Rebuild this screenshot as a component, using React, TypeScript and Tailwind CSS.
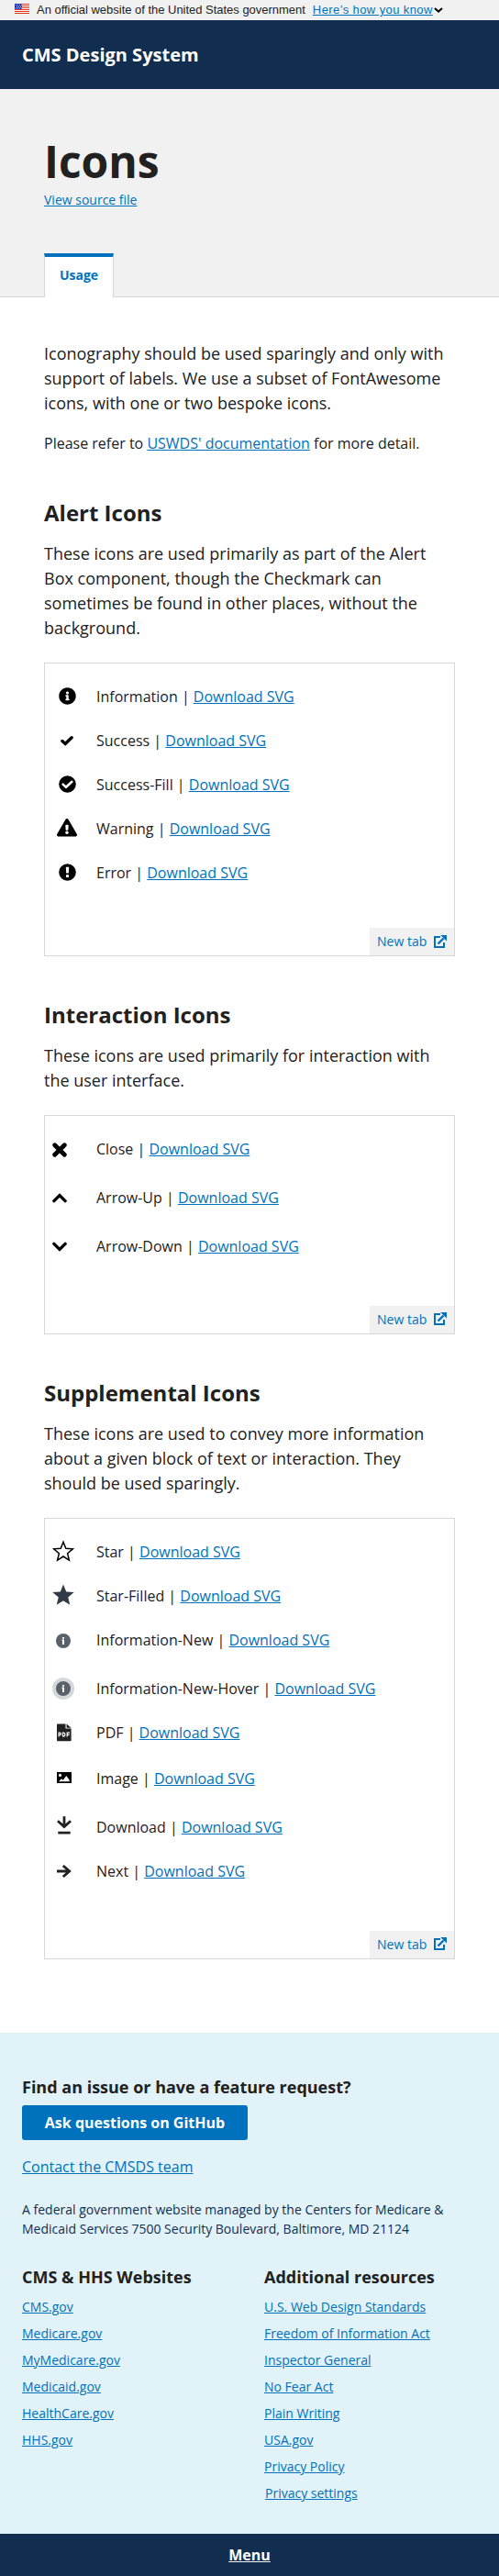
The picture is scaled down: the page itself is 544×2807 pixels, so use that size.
import React from "react";

const link = "text-[#0071bc] underline";

type IconRow = { name: string; cls: string; iconCls?: string; icon: React.ReactNode };

function FaInfo() {
  return (
    <svg viewBox="0 0 512 512" className="ml-[14.5px] size-[19px]" fill="black">
      <path d="M256 8C119.043 8 8 119.083 8 256c0 136.997 111.043 248 248 248s248-111.003 248-248C504 119.083 392.957 8 256 8zm0 110c23.196 0 42 18.804 42 42s-18.804 42-42 42-42-18.804-42-42 18.804-42 42-42zm56 254c0 6.627-5.373 12-12 12h-88c-6.627 0-12-5.373-12-12v-24c0-6.627 5.373-12 12-12h12v-64h-12c-6.627 0-12-5.373-12-12v-24c0-6.627 5.373-12 12-12h64c6.627 0 12 5.373 12 12v100h12c6.627 0 12 5.373 12 12v24z" />
    </svg>
  );
}

function FaCheck() {
  return (
    <svg viewBox="0 0 14 12" className="ml-[17px] h-3 w-3.5" fill="none" stroke="black" strokeWidth="3.4" strokeLinecap="round">
      <path d="M1.9 6.5l3.3 3L12.1 2.8" />
    </svg>
  );
}

function FaCheckCircle() {
  return (
    <svg viewBox="0 0 19 19" className="ml-[14.5px] size-[19px]" fill="none">
      <circle cx="9.5" cy="9.5" r="9.3" fill="black" />
      <path d="M4.6 9.6l3.4 3.2 6.4-6" stroke="white" strokeWidth="2.6" strokeLinecap="round" />
    </svg>
  );
}

function FaWarning() {
  return (
    <svg viewBox="0 0 576 512" className="ml-[13px] h-[19.5px] w-[22px]" fill="black">
      <path d="M569.517 440.013C587.975 472.007 564.806 512 527.94 512H48.054c-36.937 0-59.999-40.055-41.577-71.987L246.423 23.985c18.467-32.009 64.72-31.951 83.154 0l239.94 416.028zM288 354c-25.405 0-46 20.595-46 46s20.595 46 46 46 46-20.595 46-46-20.595-46-46-46zm-43.673-165.346l7.418 136c.347 6.364 5.609 11.346 11.982 11.346h48.546c6.373 0 11.635-4.982 11.982-11.346l7.418-136c.375-6.874-5.098-12.654-11.982-12.654h-61.383c-6.884 0-12.356 5.78-11.981 12.654z" />
    </svg>
  );
}

function FaError() {
  return (
    <svg viewBox="0 0 19 19" className="ml-[14.5px] size-[19px]">
      <circle cx="9.5" cy="9.5" r="9.3" fill="black" />
      <path d="M7.8 3.8h3.4l-.4 6.8H8.2zM8 12.3h3v2.8H8z" fill="white" />
    </svg>
  );
}

function CloseIcon() {
  return (
    <svg viewBox="0 0 16 16" className="ml-2 size-4" stroke="black" strokeWidth="4.8" strokeLinecap="round">
      <path d="M2.7 2.7l10.6 10.6M13.3 2.7L2.7 13.3" />
    </svg>
  );
}

function Chevron({ up }: { up?: boolean }) {
  return (
    <svg viewBox="0 0 16 16" className="ml-2 size-4" fill="none" stroke="black" strokeWidth="3.4" strokeLinecap="round">
      <path d={up ? "M1.9 11.6L8 5.6 14.1 11.6" : "M1.9 5.4L8 11.4 14.1 5.4"} />
    </svg>
  );
}

const STAR = "M12 2.2l2.8 7 7.6.6-5.8 4.9 1.8 7.4L12 18l-6.4 4.1 1.8-7.4-5.8-4.9 7.6-.6z";
const STAR_SOLID = "M12 .5l3.2 7.9 8.5.6-6.5 5.5 2.1 8.2L12 18.2l-7.3 4.5 2.1-8.2L.3 9l8.5-.6z";

function Star({ filled }: { filled?: boolean }) {
  return (
    <svg viewBox="0 0 24 24" className="ml-2 size-6" fill={filled ? "#323a45" : "none"} stroke={filled ? "none" : "black"} strokeWidth="1.5">
      <path d={filled ? STAR_SOLID : STAR} />
    </svg>
  );
}

function InfoNew({ hover }: { hover?: boolean }) {
  return (
    <svg viewBox="0 0 24 24" className="ml-2 size-6">
      {hover && <circle cx="12" cy="12" r="12" fill="#d6d7d9" />}
      <circle cx="12" cy="12" r="8" fill="#5b616b" />
      <path d="M11 8h2v1.8h-2zM10.5 10.6H13V16h-2v-4h-.5z" fill="white" />
    </svg>
  );
}

function PdfIcon() {
  return (
    <svg viewBox="0 0 16 20" className="ml-[13px] h-5 w-4">
      <path d="M0 1.5Q0 .5 1 .5h8.5v5H15.6V18.5q0 .8-1 .8H1q-1 0-1-.8zM10.6.5L15.6 4.8H10.6z" fill="#212121" />
      <g fill="none" stroke="white" strokeWidth="1.2">
        <path d="M2.1 14.5V10.2h1.1q1.2 0 1.2 1.2t-1.2 1.2H2M6.5 10.2h.8q1.6 0 1.6 1.9T7.3 13.9h-.8zM11.2 14.5v-4.3h2.9M11.2 12.4h2.4" />
      </g>
    </svg>
  );
}

function ImageIcon() {
  return (
    <svg viewBox="0 0 16 12" className="ml-[13px] h-3 w-4">
      <path d="M0 0h16v12H0z" fill="black" />
      <circle cx="3.5" cy="3.4" r="1.6" fill="white" />
      <path d="M2 10.2l3-3 1.7 1.6L10.3 4 13.6 8.4v1.8z" fill="white" />
    </svg>
  );
}

function DownloadIcon() {
  return (
    <svg viewBox="0 0 16 20" className="ml-[13px] h-5 w-4" fill="none" stroke="#212121" strokeWidth="2.8">
      <path d="M8 .3v11M1 5.2l7 6.4 7-6.4M1.3 18.1h13.4" />
    </svg>
  );
}

function NextIcon() {
  return (
    <svg viewBox="0 0 16 14" className="ml-[13px] h-3.5 w-4" fill="none" stroke="#212121" strokeWidth="2.8">
      <path d="M0 7h13M6.8 1l6.9 6-6.9 6" />
    </svg>
  );
}

function Flag() {
  return (
    <svg viewBox="0 0 16 11" className="-mt-[3px] h-[11px] w-4">
      <path d="M0 0h16v11H0z" fill="white" />
      <path d="M0 .5h16M0 2.5h16M0 4.5h16M0 6.5h16M0 8.5h16M0 10.5h16" stroke="#e0341f" />
      <path d="M0 0h8v6H0z" fill="#1e33b1" />
      <path d="M1 1.5h7M2 3.5h6M1 5h7" stroke="white" strokeWidth=".8" strokeDasharray="1 1" />
    </svg>
  );
}

function NewTab() {
  return (
    <a className="absolute right-0 bottom-0 flex h-[30px] w-[92px] items-center bg-[#f1f1f1] pl-2 text-sm text-[#0071bc]">
      <span className="w-[62px]">New tab</span>
      <svg viewBox="0 0 14 14" className="-mt-px size-3.5" fill="none" stroke="#0071bc">
        <path d="M7 2H1v11h10V8" strokeWidth="2" />
        <path d="M4.5 9.5l6-6" strokeWidth="2.4" />
        <path d="M7.2 0H14v6.6z" fill="#0071bc" stroke="none" />
      </svg>
    </a>
  );
}

function Section({ title, text, rows, box }: { title: string; text: string; rows: IconRow[]; box: string }) {
  return (
    <section className="mt-12">
      <h2 className="text-2xl leading-[31.2px] font-bold">{title}</h2>
      <p className="mt-4 text-lg leading-[27px]">{text}</p>
      <div className={"relative mt-6 border border-[#d6d7d9] pt-6 " + box}>
        {rows.map((r) => (
          <div key={r.name} className={"flex items-start " + r.cls}>
            <span className={"flex h-6 w-14 shrink-0 items-center " + (r.iconCls ?? "")}>{r.icon}</span>
            <span className="leading-6">
              {r.name} | <a className={link}>Download SVG</a>
            </span>
          </div>
        ))}
        <NewTab />
      </div>
    </section>
  );
}

function LinkColumn({ title, items, children }: { title: string; items: string[]; children?: React.ReactNode }) {
  return (
    <div>
      <h3 className="text-lg leading-[23.4px] font-bold">{title}</h3>
      <ul className="mt-[9px] flex flex-col gap-2 text-sm leading-[21px]">
        {items.map((t) => (
          <li key={t}>
            <a className={link}>{t}</a>
          </li>
        ))}
        {children}
      </ul>
    </div>
  );
}

export default function App() {
  return (
    <div className="w-[544px] bg-white font-['Open_Sans',sans-serif] text-base text-[#212121]">
      <div className="flex h-[22px] items-center bg-[#f1f1f1] pl-4 font-['Liberation_Sans',sans-serif] text-[13px]">
        <Flag />
        <span className="ml-2 tracking-[-0.02px] whitespace-nowrap">An official website of the United States government</span>
        <a className="ml-2 tracking-[0.4px] whitespace-nowrap text-[#0071bc] underline">Here’s how you know</a>
        <svg viewBox="0 0 10 6" className="ml-px h-1.5 w-2.5" fill="none" stroke="black" strokeWidth="2">
          <path d="M1 1l4 3.6L9 1" />
        </svg>
      </div>
      <header className="flex h-[75px] items-center bg-[#112e51] pl-6 text-xl font-bold text-white">CMS Design System</header>
      <div className="flex h-[227px] flex-col border-b border-[#d6d7d9] bg-[#f1f1f1] px-12">
        <h1 className="mt-12 text-5xl leading-[62px] font-bold">Icons</h1>
        <a className={"text-sm leading-[21px] " + link}>View source file</a>
        <div className="mt-auto -mb-px flex h-12 w-[76px] items-center justify-center border-x border-t-4 border-x-[#d6d7d9] border-t-[#0071bc] bg-white pb-1 text-sm font-bold text-[#0071bc]">
          Usage
        </div>
      </div>
      <main className="px-12 pt-12 pb-20">
        <p className="text-lg leading-[27px]">
          Iconography should be used sparingly and only with support of labels. We use a subset of FontAwesome icons, with one or two bespoke icons.
        </p>
        <p className="mt-[18px] leading-6">
          Please refer to <a className={link}>USWDS' documentation</a> for more detail.
        </p>
        <Section
          title="Alert Icons"
          text="These icons are used primarily as part of the Alert Box component, though the Checkmark can sometimes be found in other places, without the background."
          box="h-[320px]"
          rows={[
            { name: "Information", cls: "h-12", iconCls: "-mt-px", icon: <FaInfo /> },
            { name: "Success", cls: "h-12", icon: <FaCheck /> },
            { name: "Success-Fill", cls: "h-12", iconCls: "-mt-px", icon: <FaCheckCircle /> },
            { name: "Warning", cls: "h-12", iconCls: "-mt-px", icon: <FaWarning /> },
            { name: "Error", cls: "h-12", iconCls: "-mt-px", icon: <FaError /> },
          ]}
        />
        <Section
          title="Interaction Icons"
          text="These icons are used primarily for interaction with the user interface."
          box="h-[238.4px]"
          rows={[
            { name: "Close", cls: "h-[53px]", iconCls: "mt-px", icon: <CloseIcon /> },
            { name: "Arrow-Up", cls: "h-[53px]", icon: <Chevron up /> },
            { name: "Arrow-Down", cls: "h-[53px]", icon: <Chevron /> },
          ]}
        />
        <Section
          title="Supplemental Icons"
          text="These icons are used to convey more information about a given block of text or interaction. They should be used sparingly."
          box="h-[480.7px]"
          rows={[
            { name: "Star", cls: "h-12", iconCls: "-mt-px", icon: <Star /> },
            { name: "Star-Filled", cls: "h-12", iconCls: "-mt-px", icon: <Star filled /> },
            { name: "Information-New", cls: "h-[53px]", iconCls: "mt-px", icon: <InfoNew /> },
            { name: "Information-New-Hover", cls: "h-12", icon: <InfoNew hover /> },
            { name: "PDF", cls: "h-[50px]", icon: <PdfIcon /> },
            { name: "Image", cls: "h-[53px]", iconCls: "-mt-px", icon: <ImageIcon /> },
            { name: "Download", cls: "h-12", iconCls: "-mt-0.5", icon: <DownloadIcon /> },
            { name: "Next", cls: "h-12", icon: <NextIcon /> },
          ]}
        />
      </main>
      <footer>
        <div className="h-[546px] bg-[#e1f3f8] px-6 pt-12">
          <h3 className="text-lg leading-[23.4px] font-bold">Find an issue or have a feature request?</h3>
          <a className="mt-2 flex h-[38px] w-[246px] items-center justify-center rounded-[3px] bg-[#0071bc] font-bold text-white">Ask questions on GitHub</a>
          <p className="mt-[17px] leading-6">
            <a className={link}>Contact the CMSDS team</a>
          </p>
          <p className="mt-6 text-sm leading-[21px] text-[#112e51]">
            A federal government website managed by the Centers for Medicare &amp; Medicaid Services 7500 Security Boulevard, Baltimore, MD 21124
          </p>
          <div className="mt-[31px] grid grid-cols-[264px_1fr]">
            <LinkColumn title="CMS &amp; HHS Websites" items={["CMS.gov", "Medicare.gov", "MyMedicare.gov", "Medicaid.gov", "HealthCare.gov", "HHS.gov"]} />
            <LinkColumn
              title="Additional resources"
              items={["U.S. Web Design Standards", "Freedom of Information Act", "Inspector General", "No Fear Act", "Plain Writing", "USA.gov", "Privacy Policy"]}
            >
              <li className="pl-px">
                <a className={link}>Privacy settings</a>
              </li>
            </LinkColumn>
          </div>
        </div>
        <div className="flex h-[46px] items-center justify-center bg-[#112e51] font-bold text-white underline">Menu</div>
      </footer>
    </div>
  );
}
